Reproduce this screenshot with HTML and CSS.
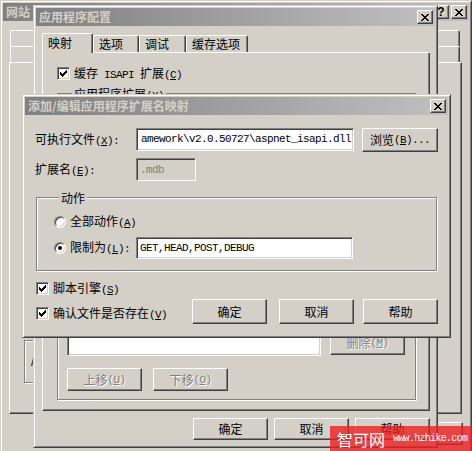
FILE: index.html
```html
<!DOCTYPE html>
<html lang="zh-CN">
<head>
<meta charset="utf-8">
<title>添加/编辑应用程序扩展名映射</title>
<link rel="stylesheet" href="styles.css">
</head>
<body>
<div class="desk">

  <section class="win w1">
    <div class="title">
      <span class="ttext">网站</span>
      <span class="tbtn tq">?</span>
      <span class="tbtn"><svg class="xic" width="8" height="7" viewBox="0 0 8 7"><path d="M0 0h2v1H0z M6 0h2v1H6z M1 1h2v1H1z M5 1h2v1H5z M2 2h4v1H2z M3 3h2v1H3z M2 4h4v1H2z M1 5h2v1H1z M5 5h2v1H5z M0 6h2v1H0z M6 6h2v1H6z"/></svg></span>
    </div>
    <div class="w1-body">
      <div class="tabrow"></div>
      <div class="tabrow"></div>
      <div class="w1-panel">
        <div class="w1-box"><span class="w1-text">/</span></div>
      </div>
      <div class="btnrow w1-btns">
        <span class="btn"></span><span class="btn"></span><span class="btn"></span><span class="btn"></span>
      </div>
    </div>
  </section>

  <section class="win w2">
    <div class="title">
      <span class="ttext">应用程序配置</span>
      <span class="tbtn"><svg class="xic" width="8" height="7" viewBox="0 0 8 7"><path d="M0 0h2v1H0z M6 0h2v1H6z M1 1h2v1H1z M5 1h2v1H5z M2 2h4v1H2z M3 3h2v1H3z M2 4h4v1H2z M1 5h2v1H1z M5 5h2v1H5z M0 6h2v1H0z M6 6h2v1H6z"/></svg></span>
    </div>
    <div class="w2-body">
      <div class="tabs">
        <span class="tab sel t1">映射</span>
        <span class="tab t2">选项</span>
        <span class="tab t3">调试</span>
        <span class="tab t4">缓存选项</span>
      </div>
      <div class="panel">
        <div class="chk-row cache-row">
          <span class="chk"><svg width="7" height="7" viewBox="0 0 7 7"><path d="M6 0h1v1H6z M5 1h2v1H5z M0 2h1v1H0z M4 2h3v1H4z M0 3h2v1H0z M3 3h3v1H3z M0 4h5v1H0z M1 5h3v1H1z M2 6h1v1H2z"/></svg></span>
          <span>缓存<span class="lt"> ISAPI </span>扩展<span class="lt">(<u>C</u>)</span></span>
        </div>
        <div class="group g-ext">
          <span class="glabel">应用程序扩展<span class="lt">(<u>X</u>)</span></span>
          <div class="ext-main">
            <div class="field listbox"></div>
            <div class="ext-side">
              <span class="btn sbtn">添加<span class="lt">(<u>D</u>)...</span></span>
              <span class="btn sbtn">编辑<span class="lt">(<u>E</u>)...</span></span>
              <span class="btn sbtn dis del">删除<span class="lt">(<u>M</u>)</span></span>
            </div>
          </div>
          <div class="ext-move">
            <span class="btn dis">上移<span class="lt">(<u>U</u>)</span></span>
            <span class="btn dis">下移<span class="lt">(<u>O</u>)</span></span>
          </div>
        </div>
      </div>
      <div class="btnrow w2-btns">
        <span class="btn">确定</span><span class="btn">取消</span><span class="btn">帮助</span>
      </div>
    </div>
  </section>

  <section class="win w3">
    <div class="title">
      <span class="ttext">添加/编辑应用程序扩展名映射</span>
      <span class="tbtn"><svg class="xic" width="8" height="7" viewBox="0 0 8 7"><path d="M0 0h2v1H0z M6 0h2v1H6z M1 1h2v1H1z M5 1h2v1H5z M2 2h4v1H2z M3 3h2v1H3z M2 4h4v1H2z M1 5h2v1H1z M5 5h2v1H5z M0 6h2v1H0z M6 6h2v1H6z"/></svg></span>
    </div>
    <div class="w3-body">
      <div class="frow">
        <span class="flabel">可执行文件<span class="lt">(<u>X</u>):</span></span>
        <span class="field exe"><span class="lt">amework\v2.0.50727\aspnet_isapi.dll</span></span>
        <span class="btn browse">浏览<span class="lt">(<u>B</u>)...</span></span>
      </div>
      <div class="frow row-ext">
        <span class="flabel">扩展名<span class="lt">(<u>E</u>):</span></span>
        <span class="field ext-field"><span class="lt">.mdb</span></span>
      </div>
      <div class="group g-act">
        <span class="glabel">动作</span>
        <div class="rrow r-all">
          <span class="radio"></span>
          <span>全部动作<span class="lt">(<u>A</u>)</span></span>
        </div>
        <div class="rrow r-lim">
          <span class="radio on"></span>
          <span class="rlabel">限制为<span class="lt">(<u>L</u>):</span></span>
          <span class="field verbs"><span class="lt">GET,HEAD,POST,DEBUG</span></span>
        </div>
      </div>
      <div class="bottom">
        <div class="checks">
          <div class="chk-row">
            <span class="chk"><svg width="7" height="7" viewBox="0 0 7 7"><path d="M6 0h1v1H6z M5 1h2v1H5z M0 2h1v1H0z M4 2h3v1H4z M0 3h2v1H0z M3 3h3v1H3z M0 4h5v1H0z M1 5h3v1H1z M2 6h1v1H2z"/></svg></span>
            <span>脚本引擎<span class="lt">(<u>S</u>)</span></span>
          </div>
          <div class="chk-row">
            <span class="chk"><svg width="7" height="7" viewBox="0 0 7 7"><path d="M6 0h1v1H6z M5 1h2v1H5z M0 2h1v1H0z M4 2h3v1H4z M0 3h2v1H0z M3 3h3v1H3z M0 4h5v1H0z M1 5h3v1H1z M2 6h1v1H2z"/></svg></span>
            <span>确认文件是否存在<span class="lt">(<u>V</u>)</span></span>
          </div>
        </div>
        <div class="w3-btns">
          <span class="btn b-ok">确定</span><span class="btn b-cancel">取消</span><span class="btn b-help">帮助</span>
        </div>
      </div>
    </div>
  </section>

  <div class="mark"><span class="mark-cn">智可网</span><span class="mark-url">www.hzhike.com</span></div>
</div>
</body>
</html>
```

FILE: styles.css
```css
* { box-sizing: border-box; }
html, body { margin: 0; padding: 0; }
body {
  width: 472px; height: 451px; overflow: hidden;
  background: #d4d0c8;
  font-family: "Noto Sans CJK SC", "Liberation Sans", sans-serif;
  font-size: 12px; line-height: 14px; color: #000;
}
.desk { position: relative; width: 472px; height: 451px; overflow: hidden; }

.lt { font-family: "Liberation Mono", "DejaVu Sans Mono", monospace; font-size: 11px; letter-spacing: -0.6px; white-space: pre; }
u { text-decoration: underline; text-underline-offset: 1px; }

/* window frame */
.win {
  position: absolute;
  display: flex; flex-direction: column;
  background: #d4d0c8;
  border: 1px solid; border-color: #d4d0c8 #404040 #404040 #d4d0c8;
  box-shadow: inset 1px 1px #fff, inset -1px -1px #808080;
  padding: 2px;
}
.w1 { left: 0; top: 0; width: 472px; height: 470px; }
.w2 { left: 33px; top: 5px; width: 405px; height: 443px; }
.w3 { left: 22px; top: 94px; width: 429px; height: 244px; }

.title {
  flex: none; height: 18px;
  display: flex; align-items: center;
  padding: 0 2px 0 3px;
  background: linear-gradient(to right, #808080, #c0c0c0);
  color: #d4d0c8; font-weight: bold; font-size: 12px; line-height: 18px;
}
.ttext { flex: 1; white-space: nowrap; }
.tbtn {
  flex: none; width: 16px; height: 14px;
  display: flex; align-items: center; justify-content: center;
  background: #d4d0c8;
  border: 1px solid; border-color: #fff #404040 #404040 #fff;
  box-shadow: inset -1px -1px #808080;
  color: #000;
}
.tbtn + .tbtn { margin-left: 2px; }
.tq { font-family: "Liberation Sans", sans-serif; font-weight: bold; font-size: 12px; line-height: 12px; }
.xic { fill: #000; display: block; margin-left: -1px; }

/* common controls */
.btn {
  flex: none;
  display: flex; align-items: center; justify-content: center;
  width: 75px; height: 23px;
  background: #d4d0c8;
  border: 1px solid; border-color: #fff #404040 #404040 #fff;
  box-shadow: inset -1px -1px #808080;
  white-space: nowrap;
}
.btn.dis { color: #808080; text-shadow: 1px 1px #fff; }
.btnrow { display: flex; justify-content: flex-end; }

.field {
  display: flex; align-items: center;
  height: 23px; padding: 0 3px;
  background: #fff;
  border: 1px solid; border-color: #808080 #fff #fff #808080;
  box-shadow: inset 1px 1px #404040, inset -1px -1px #d4d0c8;
  overflow: hidden; white-space: nowrap;
}

.chk {
  flex: none; width: 13px; height: 13px;
  display: flex; align-items: center; justify-content: center;
  background: #fff;
  border: 1px solid; border-color: #808080 #fff #fff #808080;
  box-shadow: inset 1px 1px #404040, inset -1px -1px #d4d0c8;
}
.chk svg { display: block; fill: #000; }
.chk-row { display: flex; align-items: center; gap: 4px; height: 13px; white-space: nowrap; }

.radio {
  flex: none; width: 12px; height: 12px; border-radius: 50%;
  display: flex; align-items: center; justify-content: center;
  background: #fff;
  border: 1px solid; border-color: #808080 #fff #fff #808080;
  box-shadow: inset 1px 1px #404040, inset -1px -1px #d4d0c8;
}
.radio.on::after { content: ""; width: 4px; height: 4px; border-radius: 50%; background: #000; }

.group {
  border: 1px solid #808080;
  box-shadow: 1px 1px #fff, inset 1px 1px #fff;
}
.glabel {
  display: block; width: fit-content;
  margin: -8px 0 0 5px; padding: 0 2px;
  background: #d4d0c8; line-height: 15px; white-space: nowrap;
}

/* window 1 (website properties, behind) */
.w1-body { flex: 1; padding: 9px 6px 0 6px; }
.tabrow {
  width: 450px; height: 16px; margin-left: 1px;
  border-top: 1px solid #fff; border-left: 1px solid #fff; border-right: 1px solid #404040;
  box-shadow: inset -1px 0 #808080;
  border-radius: 2px 2px 0 0;
}
.w1-panel {
  width: 453px; height: 352px;
  border: 1px solid; border-color: #fff #404040 #404040 #fff;
  box-shadow: inset -1px -1px #808080;
  padding: 277px 0 0 14px;
}
.w1-box {
  width: 120px; height: 43px;
  border: 1px solid #808080;
  box-shadow: 1px 1px #fff, inset 1px 1px #fff;
  padding: 13px 0 0 6px;
}
.w1-text { font-family: "Liberation Sans", sans-serif; }
.w1-btns { margin-top: 8px; gap: 6px; }

/* window 2 (application configuration) */
.w2-body { flex: 1; padding: 7px 5px 0 6px; }
.tabs {
  display: flex; align-items: flex-end;
  height: 20px;
  border-bottom: 1px solid #fff;
}
.tab {
  flex: none; height: 17px;
  display: flex; align-items: center;
  padding: 0 0 0 5px;
  border-top: 1px solid #fff; border-left: 1px solid #fff; border-right: 1px solid #404040;
  box-shadow: inset -1px 0 #808080;
  border-radius: 2px 2px 0 0;
  white-space: nowrap;
}
.tab.sel { height: 20px; margin-bottom: -1px; padding-bottom: 2px; background: #d4d0c8; }
.t1 { width: 51px; }
.t2 { width: 46px; }
.t3 { width: 47px; }
.t4 { width: 62px; }
.panel {
  height: 358px;
  border-left: 1px solid #fff; border-right: 1px solid #404040; border-bottom: 1px solid #404040;
  box-shadow: inset -1px -1px #808080;
  padding: 14px 0 0 14px;
}
.g-ext { width: 359px; margin-top: 13px; padding: 0 0 8px 9px; }
.ext-main { display: flex; margin-top: 10px; height: 242px; }
.listbox { width: 254px; height: 242px; }
.ext-side { display: flex; flex-direction: column; gap: 6px; margin-left: 9px; }
.sbtn { height: 24px; }
.del { margin-top: auto; margin-bottom: 1px; }
.ext-move { display: flex; gap: 11px; margin-top: 12px; }
.w2-btns { margin-top: 7px; gap: 6px; }
.w2-btns .btn { height: 22px; }

/* window 3 (add/edit mapping) */
.w3-body { flex: 1; padding: 13px 10px 0 11px; }
.frow { display: flex; align-items: center; height: 23px; }
.flabel { width: 100px; flex: none; margin-left: -1px; margin-right: 1px; white-space: nowrap; }
.exe { width: 218px; justify-content: flex-end; padding: 0 2px 1px 0; }
.browse { width: 76px; height: 24px; margin-left: 8px; }
.row-ext { margin-top: 7px; }
.ext-field { width: 60px; background: #d4d0c8; color: #808080; align-items: flex-start; padding-top: 4px; }
.g-act { width: 401px; margin-top: 16px; padding: 0 0 11px 17px; }
.rrow { display: flex; align-items: center; gap: 4px; white-space: nowrap; }
.r-all { height: 16px; margin-top: 9px; }
.r-lim { height: 22px; margin-top: 7px; }
.rlabel { width: 66px; flex: none; margin-right: -4px; }
.verbs { width: 217px; height: 22px; }
.bottom { display: flex; justify-content: space-between; margin-top: 11px; }
.checks { display: flex; flex-direction: column; gap: 12px; }
.w3-btns { display: flex; margin-top: 17px; }
.w3-btns .btn { height: 25px; }
.b-cancel { margin-left: 12px; }
.b-help { margin-left: 9px; }

/* watermark overlay */
.mark {
  position: absolute; left: 330px; top: 426px; width: 142px; height: 25px;
  display: flex; align-items: center; gap: 8px;
  padding-left: 7px;
  background: rgba(237, 30, 30, 0.8);
  color: #fff; white-space: nowrap;
}
.mark-cn { font-size: 16px; line-height: 16px; }
.mark-url { font-family: "Liberation Mono", monospace; font-size: 10px; letter-spacing: -0.7px; }
```
